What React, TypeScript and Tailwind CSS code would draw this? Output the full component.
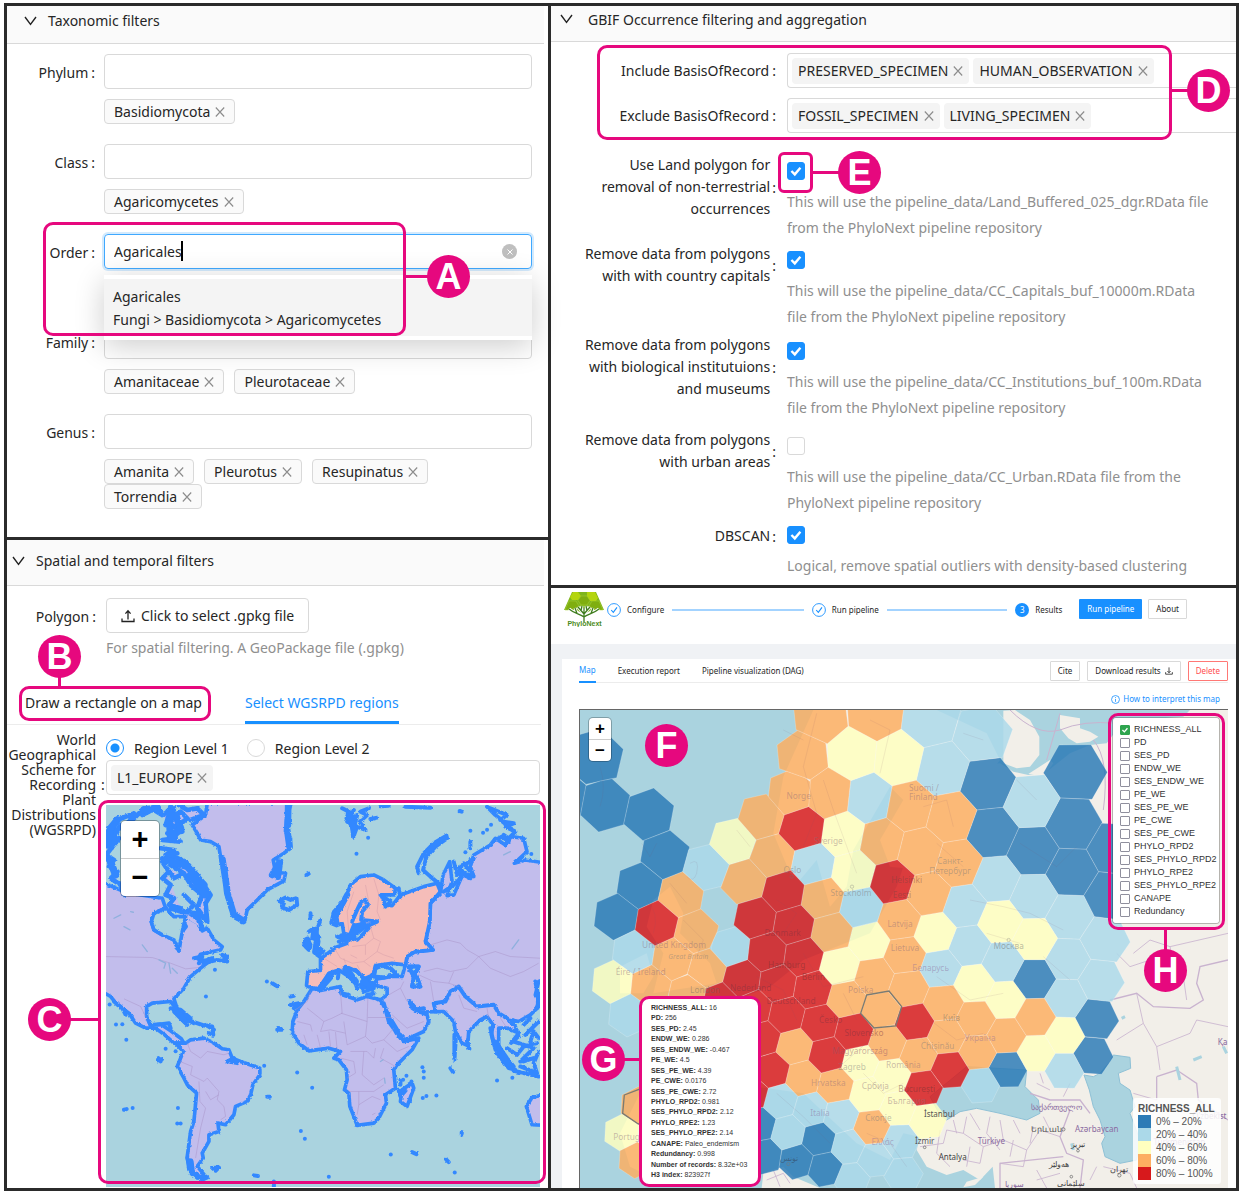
import React, { useId } from "react";

/* ---------- shared bits ---------- */

const Chevron = () => (
  <svg viewBox="0 0 13 10" className="h-[10px] w-[13px] shrink-0" fill="none" stroke="#222" strokeWidth="1.4">
    <path d="M1 1 L6.5 8.4 L12 1" />
  </svg>
);

const Cross = () => (
  <svg viewBox="0 0 10 10" className="h-[10px] w-[10px] shrink-0" fill="none" stroke="#8c8c8c" strokeWidth="1.1">
    <path d="M0.8 0.5 L9.2 9.5 M9.2 0.5 L0.8 9.5" />
  </svg>
);

const Tick = ({ className = "" }: { className?: string }) => (
  <svg viewBox="0 0 18 18" className={`pointer-events-none ${className}`} fill="none" stroke="#fff" strokeWidth="2.4">
    <path d="M4.4 9 L7.8 12.4 L13.4 5.8" />
  </svg>
);

function Tag({ children, filled = false }: { children: string; filled?: boolean }) {
  return (
    <span
      className={
        filled
          ? "inline-flex h-[26px] items-center gap-[5px] rounded-sm bg-[#f4f4f4] px-[6px]"
          : "inline-flex h-[25px] items-center gap-[5px] rounded-sm border border-[#d9d9d9] bg-[#fafafa] px-[9px]"
      }
    >
      {children}
      <button type="button" aria-label={`Remove ${children}`} className="flex">
        <Cross />
      </button>
    </span>
  );
}

function Badge({ letter, className }: { letter: string; className: string }) {
  return (
    <span
      className={`absolute z-30 flex size-[43px] items-center justify-center rounded-full bg-[#e6087e] font-['Liberation_Sans',sans-serif] text-[36px] leading-none font-bold text-white ${className}`}
    >
      {letter}
    </span>
  );
}

const Frame = ({ className }: { className: string }) => (
  <span className={`pointer-events-none absolute z-20 border-[3px] border-[#e6087e] ${className}`} />
);
const Link = ({ className }: { className: string }) => <span className={`absolute z-20 bg-[#e6087e] ${className}`} />;

function PanelHeader({ title, className, gap = "gap-[11px]" }: { title: string; className: string; gap?: string }) {
  return (
    <h2 className={`flex items-center border-b border-[#d9d9d9] bg-[#fafafa] ${className}`}>
      <button type="button" className={`flex items-center ${gap}`}>
        <Chevron />
        {title}
      </button>
    </h2>
  );
}

/* ---------- taxonomic filters ---------- */

const ranks = [
  { name: "Phylum", tags: ["Basidiomycota"] },
  { name: "Class", tags: ["Agaricomycetes"] },
  { name: "Order", tags: [], open: true },
  { name: "Family", tags: ["Amanitaceae", "Pleurotaceae"] },
  { name: "Genus", tags: ["Amanita", "Pleurotus", "Resupinatus", "Torrendia"] },
];

function Taxonomic() {
  const id = useId();
  return (
    <section className="relative border-b-[3px] border-[#2b2b2b] pb-[6px]">
      <PanelHeader title="Taxonomic filters" className="mr-1 h-[38px] pb-[8px] pl-[17px]" />
      <form className="grid gap-5 pt-[10px] pr-[16px]">
        {ranks.map((r) => (
          <div key={r.name} className="grid grid-cols-[88px_1fr] gap-x-[9px]">
            <label htmlFor={id + r.name} className="pt-2 text-right leading-[21px]">
              {r.name}
              <span className="ml-[3px]">:</span>
            </label>
            <div className="relative">
              <input
                id={id + r.name}
                defaultValue={r.open ? "Agaricales" : ""}
                className={
                  r.open
                    ? "h-[35px] w-full rounded-sm border border-[#40a9ff] px-[9px] shadow-[0_0_0_2px_#d3eafd] outline-none"
                    : "h-[35px] w-full rounded-sm border border-[#d9d9d9] px-[9px] outline-none"
                }
              />
              {r.open && (
                <>
                  <span className="absolute top-[7px] left-[77px] h-5 w-[2px] bg-black" />
                  <button
                    type="button"
                    aria-label="Clear"
                    className="absolute top-[10px] right-[15px] flex size-[15px] items-center justify-center rounded-full bg-[#bfbfbf]"
                  >
                    <svg viewBox="0 0 6 6" className="size-[6px]" stroke="#fff" strokeWidth="1">
                      <path d="M0.5 0.5 L5.5 5.5 M5.5 0.5 L0.5 5.5" />
                    </svg>
                  </button>
                  <ul className="absolute top-[41px] right-0 left-0 z-10 bg-white py-1 shadow-[0_6px_30px_rgba(0,0,0,0.2)]">
                    <li className="bg-[#f4f4f4] px-[9px] pt-[6px] pb-[5px] leading-[23px]">
                      Agaricales
                      <br />
                      Fungi &gt; Basidiomycota &gt; Agaricomycetes
                    </li>
                  </ul>
                </>
              )}
              <div className="mt-[10px] flex min-h-[25px] max-w-[340px] flex-wrap gap-x-[10px]">
                {r.tags.map((t) => (
                  <Tag key={t}>{t}</Tag>
                ))}
              </div>
            </div>
          </div>
        ))}
      </form>
      <div className="h-[22px]" />
      <Frame className="top-[216px] left-[36px] h-[114px] w-[363px] rounded-[10px]" />
      <Link className="top-[269px] left-[398px] h-[3px] w-6" />
      <Badge letter="A" className="top-[249px] left-[420px]" />
    </section>
  );
}

/* ---------- world map ---------- */

const coastPurple = [
  // Greenland
  "M350,24 L345,60 305,90 320,115 330,135 360,140 385,155 392,200 405,230 405,290 420,340 435,370 462,380 470,345 500,315 530,285 580,258 585,235 555,232 548,195 580,175 600,160 600,130 585,110 588,70 602,24 Z",
  // North America
  "M30,588 L60,605 80,630 115,655 135,685 165,700 195,700 220,718 250,745 280,745 272,732 240,708 210,688 178,690 168,665 168,635 185,625 240,620 262,648 250,612 280,580 300,545 330,520 355,500 322,492 330,478 390,465 395,455 370,435 350,400 335,408 322,385 300,372 285,365 280,400 265,440 265,468 250,435 215,420 190,405 182,380 190,355 225,340 215,310 150,300 100,290 30,260 Z",
  // South America
  "M255,745 L285,745 300,735 340,730 370,745 395,762 415,765 425,790 450,800 508,820 508,840 487,870 480,900 470,920 435,935 430,960 405,990 382,985 385,1010 355,1020 355,1040 335,1075 338,1090 320,1115 345,1145 320,1150 295,1125 290,1085 300,1010 310,980 318,895 290,870 280,850 260,815 270,790 278,770 Z",
  // Africa
  "M665,580 L690,587 750,575 755,600 800,615 830,605 870,615 885,625 900,670 925,715 940,740 985,730 965,765 920,810 910,825 915,880 885,900 888,925 865,970 850,985 800,992 790,965 778,935 775,895 762,885 770,855 768,825 745,795 730,790 750,770 715,760 655,768 625,745 605,712 607,680 620,645 640,620 Z",
  "M935,885 L965,865 970,880 950,935 930,920 Z",
  // Asia
  "M1370,205 L1305,195 1272,205 1310,170 1300,130 1262,125 1245,150 1215,130 1200,150 1150,180 1140,215 1150,245 1120,235 1108,215 1112,250 1090,300 1070,302 1085,260 1078,200 1058,240 1050,295 1020,325 1018,380 1005,440 1028,465 975,470 950,485 945,510 935,545 905,545 860,552 850,570 890,580 890,600 870,615 900,670 930,720 945,735 1000,710 1015,680 1010,660 985,650 957,618 965,640 985,652 1060,650 1090,680 1095,710 1115,745 1132,752 1135,710 1170,675 1190,665 1208,690 1203,720 1215,765 1238,785 1225,750 1225,700 1250,700 1285,715 1262,745 1285,725 1275,695 1250,672 1285,680 1320,660 1350,630 1335,600 1345,560 1370,550 Z",
  "M1370,898 L1325,908 1308,935 1325,990 1370,992 Z",
];

const europe =
  "M648,572 L652,530 690,527 690,492 735,458 770,445 757,425 778,425 800,435 835,400 812,395 790,390 778,420 760,415 755,385 738,392 722,385 730,350 765,310 780,270 810,245 850,240 880,255 915,280 912,300 872,300 885,330 905,332 930,300 1000,275 1040,265 1050,290 1020,325 1018,380 1005,440 1028,465 975,470 950,485 945,510 905,505 855,512 848,540 820,552 800,530 765,515 790,555 745,525 715,535 685,582 660,578 Z";

const scribbles =
  "M50,110 L70,100 55,130 90,90 60,150 85,130 50,175 M46,180 L70,195 55,215 80,230 60,250 90,270 100,300 M80,75 L130,55 110,90 160,40 175,50 155,60 200,30 215,60 190,45 M215,60 L250,40 235,80 270,50 290,70 260,95 240,90 275,110 230,115 255,130 215,135 270,140 M240,30 L235,60 225,90 M265,30 L290,45 320,40 340,60 300,75 M210,160 L250,165 225,180 260,175 M215,190 L250,185 285,200 320,240 360,300 345,325 350,380 320,340 335,300 300,270 280,235 240,210 M215,200 L235,230 215,250 240,270 225,300 250,310 235,330 270,340 M225,215 L250,250 270,240 M280,300 L310,330 290,350 320,370 M255,390 L270,370 285,395 265,420 M240,340 L270,350 320,355 335,400";

const blueBits = [
  "M755,40 L775,50 768,70 785,95 788,128 800,95 825,105 808,80 830,60 810,50 835,40 M790,45 L770,80 800,60 790,100",
  "M840,72 L860,68 M945,35 L1020,38 M1108,48 L1114,50 M870,34 L895,32",
  "M985,235 L980,215 1000,175 1030,145 1068,122 1070,130 1035,155 1008,185 998,225 1020,245 1048,268",
  "M1190,35 L1215,60 1240,80 1270,85 1245,95 1275,110 1255,130 1240,120 M1200,40 L1250,60 1230,75 1262,100 M1215,135 L1235,125 1255,140",
  "M565,318 L580,325 575,338 595,345 620,330 618,310 600,315 585,308 Z",
  "M640,450 L650,435 660,450 655,465 645,455 M655,410 L670,400 665,430 685,425 675,450 700,470 680,480 695,490 M680,400 L675,440 690,470 M660,355 L660,370 M690,375 L685,390",
  "M740,425 L760,430 745,440 775,435 M785,380 L800,345 812,320 825,315 832,330 815,350 812,375 860,380 825,395 800,415",
  "M700,560 L725,535 745,530 742,550 M760,520 L775,545 800,570 790,555 M790,550 L800,580 M815,560 L850,565 850,580 820,590 810,570 845,585 M752,595 L775,600 M830,600 L850,595 M795,525 L830,560 845,545",
  "M855,520 L850,545 880,548 920,540 900,520 875,512 Z",
  "M955,515 L985,515 975,535 990,575 965,575 970,545 Z",
  "M870,300 L900,320 885,335 M925,280 L930,305",
  "M1060,290 L1090,270 1120,240 1140,250 M1090,200 L1100,240 1120,205 1148,240 M1150,190 L1130,205 M1140,140 L1140,160",
  "M240,640 L270,645 300,670 265,660 310,685 290,675 340,692 365,695 368,720 355,715 M255,650 L290,690 M200,690 L235,685 240,700 M345,690 L370,705",
  "M410,800 L430,790 440,805 415,800 M290,1090 L300,1130 335,1155 350,1148",
  "M310,490 L335,485 325,505 365,490 M340,505 L380,495 410,500 395,480 410,485",
  "M70,620 L95,640 105,660",
  "M1200,700 L1210,745 1240,790 1275,825 1255,820 1220,775 M1215,740 L1250,790 1270,815 M1250,760 L1280,780 1300,755 1340,745 M1270,740 L1330,760 1290,800 1330,790 1300,800 M1300,690 L1320,670 M1305,720 L1345,680 M1320,740 L1330,710 1345,730 M1270,828 L1345,845 M1290,815 L1340,835 1330,805 1345,770",
  "M1335,560 L1345,610 1340,640",
  "M1092,720 L1092,795 1096,735 M1080,820 L1088,832 M1130,740 L1137,762",
  "M365,1120 L385,1118 375,1128 Z M490,1142 L502,1144 M550,1160 L550,1180 M1068,1095 L1075,1102 M965,1072 L978,1078 M1114,1012 L1114,1020",
  "M203,790 L210,800 M202,797 L214,793 M530,906 L538,906 M100,945 L108,943 M545,565 L560,574 M600,605 L610,603 M600,630 L625,625 610,640 M560,705 L575,705 565,700 M648,240 L655,236 M930,870 L930,858 M925,888 L930,905 945,888",
  "M1030,625 L1065,620 1080,590 1105,575 1125,605 1160,635 1210,630 1225,655 1250,670 M1035,650 L1030,625",
  "M880,625 L895,680 930,730 M905,690 L918,715 M960,620 L975,645 1000,640",
];

const dots = [
  [346, 605], [529, 560], [76, 689], [95, 688], [107, 735], [225, 762], [255, 769], [521, 813], [620, 833], [665, 879],
  [126, 940], [262, 940], [260, 986], [270, 986], [631, 1009], [643, 1032], [901, 1079], [715, 1146], [1093, 1133], [996, 817],
  [1000, 830], [1000, 849], [1038, 902], [1008, 904], [997, 910], [948, 843], [938, 855], [1220, 857], [1266, 849], [833, 128],
  [798, 176], [1140, 107], [1125, 172], [1178, 113], [1190, 104], [1202, 89], [1323, 177], [373, 525], [57, 629], [963, 860],
];

const countryLines =
  "M46,485 L185,488 240,505 285,522 325,518 M100,612 L150,635 165,665 M290,745 L300,770 330,790 350,770 400,780 415,775 M268,800 L305,815 300,840 340,860 350,850 385,890 380,915 400,935 405,965 390,975 M325,860 L328,920 345,940 330,1000 315,1090 M345,890 L360,915 385,900 M660,590 L650,620 615,645 M650,640 L700,680 725,670 755,655 750,590 M620,680 L660,690 665,710 M752,655 L830,680 832,610 M832,668 L905,668 M700,680 L690,710 720,705 765,715 770,750 M765,715 L760,680 M770,750 L825,725 830,680 M825,725 L845,745 880,735 910,700 M780,770 L830,770 850,790 855,760 M750,790 L790,800 795,835 770,850 M820,770 L815,840 850,870 880,850 M870,790 L915,815 M880,760 L870,790 M775,890 L850,890 880,870 M805,890 L805,930 800,960 M805,930 L845,905 870,915 M845,960 L855,955 M640,720 L650,750 M680,720 L690,760 M715,710 L720,755 M735,712 L740,765 M880,735 L920,770 955,755 M1020,450 L1070,435 1110,445 1130,465 1165,485 1215,470 1260,485 1349,490 M1165,485 L1200,520 1260,545 1300,530 1345,505 M1165,485 L1130,520 1080,530 1040,520 1000,530 M985,540 L1030,560 1075,565 1090,530 M1075,565 L1105,575 M1020,560 L1030,620 M895,600 L930,580 940,560 M930,580 L950,620 M905,660 L950,700 1000,680 M1105,600 L1120,640 1160,650 M1190,640 L1195,670 M1230,670 L1250,700";

const europeLines =
  "M790,290 L770,350 775,410 M825,270 L835,320 M850,250 L865,300 860,350 870,375 M840,395 L850,430 825,450 785,455 M700,490 L740,515 M735,465 L750,490 785,505 820,500 860,470 880,480 910,490 M825,450 L825,480 M760,490 L765,505 M850,430 L870,440 860,470 M800,510 L815,540 M820,500 L840,515 M780,480 L800,490";

function WorldMap() {
  return (
    <svg viewBox="46 30 1303 1148" preserveAspectRatio="xMinYMin slice" className="block h-[382px] w-full bg-[#aad3df]" role="img" aria-label="World regions">
      <defs>
        <filter id="rough" x="-5%" y="-5%" width="110%" height="110%" colorInterpolationFilters="sRGB">
          <feTurbulence type="fractalNoise" baseFrequency="0.12" numOctaves="2" seed="4" />
          <feDisplacementMap in="SourceGraphic" scale="8" xChannelSelector="R" yChannelSelector="G" />
        </filter>
      </defs>
      <g filter="url(#rough)" stroke="#3388ff" strokeWidth="11" strokeLinejoin="round" strokeLinecap="round">
        {coastPurple.map((d) => (
          <path key={d} d={d} fill="#c2bdec" />
        ))}
        <path d={scribbles} fill="#c2bdec" fillRule="evenodd" strokeWidth="14" />
        <path d="M80,75 L60,100 50,150 M160,45 L200,40 M235,50 L240,130 270,100 255,60 M225,195 L290,215 340,270 M55,190 L75,240 M300,240 L345,300" fill="none" strokeWidth="22" />
        <path d="M265,468 L250,435 215,420 190,405 182,380 190,355 225,340 250,365 285,365 275,410 Z" fill="#aad3df" />
        <path d={europe} fill="#f5bdb9" />
        <path d="M955,515 L985,515 975,535 990,575 965,575 970,545 Z M855,520 L850,545 880,548 920,540 900,520 875,512 Z" fill="#aad3df" />
        <path d={blueBits.join(" ")} fill="none" strokeWidth="12" />
        <path d="M590,105 L597,155 M593,30 L592,90 M395,190 L412,300 430,360 458,378 M545,240 L568,200 562,245" fill="none" strokeWidth="20" />
        <path d="M738,385 L735,365 770,300 M775,55 L790,105 M300,1100 L305,1135 335,1150" fill="none" strokeWidth="18" />
        <path d="M650,435 L655,455 M672,405 L680,440 675,470 M755,425 L785,430 800,395 820,390 M770,525 L795,560 M820,560 L840,575 M255,650 L285,680 M690,580 L720,545" fill="none" strokeWidth="20" />
      </g>
      <g fill="none" stroke="#a58fc4" strokeOpacity="0.6" strokeWidth="2.2">
        <path d={countryLines} />
        <path d={europeLines} stroke="#d29aa8" />
      </g>
      <g fill="none" stroke="#8fb0dd" strokeWidth="5" strokeLinecap="round">
        <path d="M205,495 L225,505 220,520 M235,505 L240,535 M245,520 L260,535 M155,450 L170,470 M70,370 L90,360 M120,350 L128,352 M100,395 L118,405 M1265,462 L1285,435 M870,800 L878,795 M882,850 L884,865 M1240,180 L1260,170" strokeWidth="4" />
      </g>
      <g fill="#3388ff">
        {dots.map(([x, y]) => (
          <circle key={`${x}-${y}`} cx={x} cy={y} r="6" />
        ))}
      </g>
    </svg>
  );
}

function ZoomButtons({ small = false }: { small?: boolean }) {
  return (
    <div
      className={
        small
          ? "absolute top-2 left-[9px] grid w-[22px] divide-y divide-[#ccc] rounded-sm bg-white text-[17px] leading-[21px] shadow-[0_0_0_1px_rgba(0,0,0,0.25)]"
          : "absolute top-4 left-[15px] grid w-[38px] divide-y divide-[#ccc] rounded-sm bg-white text-[29px] leading-[37px] shadow-[0_0_0_1px_rgba(0,0,0,0.3)]"
      }
    >
      <button type="button" aria-label="Zoom in" className="font-['Liberation_Sans',sans-serif] font-bold text-black">
        +
      </button>
      <button type="button" aria-label="Zoom out" className="font-['Liberation_Sans',sans-serif] font-bold text-black">
        −
      </button>
    </div>
  );
}

/* ---------- spatial filters ---------- */

function Radio({ label, on = false }: { label: string; on?: boolean }) {
  return (
    <label className="flex items-center gap-[10px]">
      <input
        type="radio"
        name="level"
        defaultChecked={on}
        className="size-[18px] appearance-none rounded-full border border-[#d9d9d9] bg-white checked:border-[#1890ff] checked:bg-[radial-gradient(circle,#1890ff_0_4px,#fff_5px)]"
      />
      {label}
    </label>
  );
}

function Spatial() {
  return (
    <section className="relative">
      <PanelHeader title="Spatial and temporal filters" className="mr-1 h-[46px] pb-[4px] pl-[5px]" />
      <div className="grid grid-cols-[89px_1fr] gap-x-[10px] pt-3">
        <label htmlFor="gpkg" className="pt-2 text-right leading-[21px]">
          Polygon<span className="ml-[3px]">:</span>
        </label>
        <div>
          <button id="gpkg" type="button" className="flex h-[35px] items-center gap-[6px] rounded-sm border border-[#d9d9d9] px-[14px]">
            <svg viewBox="0 0 14 14" className="size-[14px]" fill="none" stroke="#222" strokeWidth="1.3">
              <path d="M1 9.5 V12.5 H13 V9.5 M7 10.5 V2 M4.4 4.6 L7 1.8 L9.6 4.6" />
            </svg>
            Click to select .gpkg file
          </button>
          <p className="pt-1 leading-[22px] text-[#8f8f8f]">For spatial filtering. A GeoPackage file (.gpkg)</p>
        </div>
      </div>
      <div className="relative mt-[25px] mr-[7px] flex gap-[43px] border-b border-[#ececec] pl-[18px]">
        <button type="button" className="h-[40px] pb-[3px]">
          Draw a rectangle on a map
        </button>
        <button type="button" className="h-[40px] border-b-[3px] border-[#1890ff] text-[#1890ff]">
          Select WGSRPD regions
        </button>
        <Frame className="top-[2px] left-[12px] h-[35px] w-[192px] rounded-[10px]" />
        <Link className="-top-[8px] left-[51px] h-[11px] w-[3px]" />
        <Badge letter="B" className="-top-[49px] left-[31px]" />
      </div>
      <div className="relative flex">
        <div className="flex h-[118px] w-[99px] shrink-0 items-center">
          <span id="wg" className="w-[89px] text-right leading-[15px]">
            World Geographical Scheme for Recording Plant Distributions (WGSRPD)
          </span>
          <span className="ml-[5px]">:</span>
        </div>
        <div className="flex-1 pr-2">
          <div className="flex h-[35px] items-center gap-[18px] pt-[11px]" role="radiogroup" aria-labelledby="wg">
            <Radio label="Region Level 1" on />
            <Radio label="Region Level 2" />
          </div>
          <div className="flex h-[35px] items-center rounded-sm border border-[#d9d9d9] px-[4px]">
            <Tag filled>L1_EUROPE</Tag>
          </div>
          <div className="relative mt-[10px]">
            <WorldMap />
            <ZoomButtons />
            <Frame className="-top-[5px] -right-[6px] bottom-[3px] -left-2 rounded-[10px]" />
            <Link className="top-[213px] -left-[36px] h-[3px] w-[30px]" />
            <Badge letter="C" className="top-[193px] -left-[78px]" />
          </div>
        </div>
      </div>
    </section>
  );
}

/* ---------- GBIF filters ---------- */

const records = [
  { label: "Include BasisOfRecord", tags: ["PRESERVED_SPECIMEN", "HUMAN_OBSERVATION"] },
  { label: "Exclude BasisOfRecord", tags: ["FOSSIL_SPECIMEN", "LIVING_SPECIMEN"] },
];

const options = [
  { label: ["Use Land polygon for", "removal of non-terrestrial", "occurrences"], on: true, hint: ["This will use the pipeline_data/Land_Buffered_025_dgr.RData file", "from the PhyloNext pipeline repository"], space: "mb-[2px]" },
  { label: ["Remove data from polygons", "with with country capitals"], on: true, hint: ["This will use the pipeline_data/CC_Capitals_buf_10000m.RData", "file from the PhyloNext pipeline repository"], space: "mb-1" },
  { label: ["Remove data from polygons", "with biological institutuions", "and museums"], on: true, hint: ["This will use the pipeline_data/CC_Institutions_buf_100m.RData", "file from the PhyloNext pipeline repository"], space: "mb-2" },
  { label: ["Remove data from polygons", "with urban areas"], on: false, hint: ["This will use the pipeline_data/CC_Urban.RData file from the", "PhyloNext pipeline repository"], space: "mb-[2px]" },
  { label: ["DBSCAN"], on: true, hint: ["Logical, remove spatial outliers with density-based clustering"], space: "" },
];

function Gbif() {
  return (
    <section className="relative border-b-[3px] border-[#2b2b2b] pb-[6px]">
      <PanelHeader title="GBIF Occurrence filtering and aggregation" gap="gap-[15px]" className="h-[36px] pb-[9px] pl-[9px]" />
      <div className="relative grid gap-[10px] pt-[11px]">
        {records.map((r) => (
          <div key={r.label} className="grid grid-cols-[225px_1fr] gap-x-[11px]">
            <span className="pt-[7px] text-right leading-[21px]">
              {r.label}
              <span className="ml-[3px]">:</span>
            </span>
            <div className="flex h-[35px] items-center gap-1 rounded-l-sm border border-r-0 border-[#d9d9d9] px-[4px]">
              {r.tags.map((t) => (
                <Tag key={t} filled>
                  {t}
                </Tag>
              ))}
            </div>
          </div>
        ))}
        <Frame className="top-[3px] left-[46px] h-[95px] w-[575px] rounded-[10px]" />
        <Link className="top-[47px] left-[620px] h-[3px] w-[18px]" />
        <Badge letter="D" className="top-[27px] left-[636px]" />
      </div>
      <div className="relative pt-[21px]">
        {options.map((o, i) => (
          <div key={i} className={`grid grid-cols-[225px_1fr] gap-x-[11px] ${o.space}`}>
            <div className={o.label.length === 1 ? "flex items-center justify-end self-start pt-[7px]" : "flex items-center justify-end self-start"}>
              <label htmlFor={`opt${i}`} className="text-right leading-[22px]">
                {o.label.map((l) => (
                  <React.Fragment key={l}>
                    {l}
                    <br />
                  </React.Fragment>
                ))}
              </label>
              <span className="ml-[2px]">:</span>
            </div>
            <div>
              <div className="relative mt-2 size-[18px]">
                <input
                  id={`opt${i}`}
                  type="checkbox"
                  defaultChecked={o.on}
                  className="peer block size-[18px] appearance-none rounded-[3px] border border-[#d9d9d9] bg-white checked:border-[#1890ff] checked:bg-[#1890ff]"
                />
                <Tick className="absolute inset-0 hidden size-[18px] peer-checked:block" />
              </div>
              <p className="pt-[9px] leading-[26px] whitespace-nowrap text-[#8f8f8f]">
                {o.hint[0]}
                {o.hint[1] && <br />}
                {o.hint[1]}
              </p>
            </div>
          </div>
        ))}
        <Frame className="top-[19px] left-[227px] h-[41px] w-[35px] rounded-md" />
        <Link className="top-[38px] left-[261px] h-[3px] w-[27px]" />
        <Badge letter="E" className="top-[18px] left-[287px]" />
      </div>
    </section>
  );
}

/* ---------- hexagon map ---------- */

type Cell = [number, number, string];
const layers: Record<string, number[][]> = {
  "#2c7bb6": [
    [73, 173], [105, 315], [-27, 291], [236, 344], [284, 468], [209, 559], [139, 650], [1252, 252], [1266, 400], [1516, 218],
    [1509, 374], [1387, 455], [1504, 519], [1633, 448], [1618, 590], [1393, 838], [1578, 958], [1568, 1067], [1313, 1107],
    [565, 1275], [745, 1317], [583, 1368], [680, 1383], [765, 1407],
  ],
  "#abd9e9": [
    [408, 503], [728, 493], [872, 623], [896, 298], [1080, 60], [1235, 105], [1116, 209], [1383, 308], [1278, 540], [1390, 592],
    [1183, 621], [1498, 652], [1602, 720], [1198, 738], [1112, 807], [1298, 787], [1488, 896], [1590, 843], [1492, 780],
    [1484, 1112], [1233, 1155], [192, 758], [483, 745], [177, 945], [630, 1203], [722, 1230], [810, 1250], [655, 1298],
    [835, 1340], [915, 1378], [990, 1325], [1000, 1425], [845, 1440],
  ],
  "#ffffbf": [
    [489, 425], [818, 405], [850, 515], [848, 165], [985, 178], [1095, 699], [897, 726], [1289, 667], [1392, 720], [1212, 853],
    [1305, 902], [1484, 1008], [1397, 1059], [870, 1088], [966, 1128], [893, 1183], [985, 1225], [1072, 1262], [128, 845],
    [808, 799], [155, 1298],
  ],
  "#fdae61": [
    [332, 586], [376, 698], [574, 352], [525, 546], [608, 470], [756, 596], [784, 698], [777, 285], [660, 278], [698, 170],
    [752, 50], [915, 40], [935, 428], [1018, 322], [1141, 354], [1048, 456], [1164, 492], [1076, 584], [988, 662], [1003, 768],
    [1121, 910], [1014, 865], [1217, 957], [1309, 1008], [1395, 953], [1222, 1057], [1130, 1010], [1045, 1065], [905, 1283],
    [242, 858], [308, 778], [413, 808], [355, 885], [673, 1040], [828, 898], [933, 930], [913, 830], [953, 1030], [699, 1135],
    [795, 1158], [207, 1218], [197, 1380], [265, 1130],
  ],
  "#d7191c": [
    [260, 670], [697, 388], [640, 576], [558, 656], [670, 676], [966, 547], [1033, 967], [1140, 1108], [1060, 1165], [450, 905],
    [516, 837], [590, 757], [699, 772], [622, 852], [727, 870], [648, 945], [552, 925], [749, 970], [771, 1065], [850, 996],
    [605, 1113], [577, 1015], [545, 1180],
  ],
};

const cells: Cell[] = Object.entries(layers).flatMap(([c, pts]) => pts.map(([x, y]) => [x, y, c] as Cell));

/* Each cell starts as a hexagon sized by its neighbours, then is cut by the bisectors to them. */
function cellPath([cx, cy]: Cell): string {
  const near = cells
    .map(([x, y]) => ({ dx: x - cx, dy: y - cy, d: Math.hypot(x - cx, y - cy) }))
    .filter((n) => n.d > 1 && n.d < 240)
    .sort((a, b) => a.d - b.d);
  const k = near.slice(0, 6).filter((n) => n.d < near[0].d * 1.4);
  const dist = k.reduce((s, n) => s + n.d, 0) / k.length;
  let sx = 0;
  let sy = 0;
  k.forEach((n) => {
    const a = Math.atan2(n.dy, n.dx) * 6;
    sx += Math.cos(a);
    sy += Math.sin(a);
  });
  const base = Math.atan2(sy, sx) / 6 + Math.PI / 6;
  const radius = (dist / Math.sqrt(3)) * (k.length > 5 ? 1.3 : k.length > 3 ? 1.09 : 1.05);
  let poly = Array.from({ length: 6 }, (_, i) => {
    const a = base + (i * Math.PI) / 3;
    return [cx + radius * Math.cos(a), cy + radius * Math.sin(a)];
  });
  near.forEach((n) => {
    const side = (p: number[]) => (p[0] - cx - n.dx / 2) * n.dx + (p[1] - cy - n.dy / 2) * n.dy;
    const out: number[][] = [];
    poly.forEach((p, i) => {
      const q = poly[(i + 1) % poly.length];
      const a = side(p);
      const b = side(q);
      if (a <= 0) out.push(p);
      if (a * b < 0) {
        const t = a / (a - b);
        out.push([p[0] + (q[0] - p[0]) * t, p[1] + (q[1] - p[1]) * t]);
      }
    });
    poly = out;
  });
  return poly.map((p) => p.map((v) => Math.round(v)).join(",")).join(" ");
}

const places: [number, number, string, string][] = [
  [686, 298, "Norge", "#8a6a78"], [775, 431, "Sverige", "#8a6a78"], [667, 518, "Oslo", "#777"], [843, 588, "Stockholm", "#777"],
  [1010, 548, "Helsinki", "#7a4040"], [996, 595, "Eesti", "#7a4040"], [990, 682, "Latvija", "#8a6a78"], [1005, 752, "Lietuva", "#8a6a78"],
  [638, 708, "Danmark", "#7a3040"], [312, 745, "United Kingdom", "#8a6a78"], [355, 778, "Great Britain", "#777"], [212, 826, "Éire / Ireland", "#8a6a78"],
  [405, 880, "London", "#666"], [542, 872, "Nederland", "#7a3040"], [650, 803, "Hamburg", "#6a3030"], [730, 840, "Berlin", "#6a3030"],
  [663, 913, "Deutschland", "#7a3040"], [872, 880, "Polska", "#8a6a78"], [782, 968, "Česko", "#7a3040"], [882, 1007, "Slovensko", "#7a3040"],
  [870, 1062, "Magyarország", "#8a5068"], [846, 1110, "Zagreb", "#777"], [775, 1158, "Hrvatska", "#8a6a78"], [916, 1166, "Србија", "#8a6a78"],
  [1000, 1105, "România", "#8a6a78"], [1040, 1177, "București", "#6a3030"], [1010, 1213, "България", "#8a6a78"], [925, 1262, "Скопје", "#777"],
  [938, 1336, "Ελλάς", "#8a6a9a"], [750, 1247, "Italia", "#8a6a9a"], [180, 1320, "Portugal", "#8a6a78"], [657, 1382, "تونس", "#334"],
  [1062, 272, "Suomi /", "#8a6a78"], [1060, 300, "Finland", "#8a6a78"], [1140, 493, "Санкт-", "#777"], [1140, 521, "Петербург", "#777"],
  [1316, 748, "Москва", "#666"], [1082, 814, "Беларусь", "#8a6a9a"], [1144, 962, "Київ", "#666"], [1230, 1023, "Україна", "#8a6a9a"],
  [1103, 1046, "Chișinău", "#777"],
];

const openPlaces: [number, number, string, string][] = [
  [1108, 1252, "İstanbul", "#555"], [1064, 1332, "İzmir", "#555"], [1148, 1380, "Antalya", "#444"], [1264, 1331, "Türkiye", "#8a6aa0"],
  [1458, 1230, "საქართველო", "#8a6aa0"], [1430, 1296, "Երևան", "#555"], [1580, 1296, "Azərbaycan", "#8a6aa0"], [1525, 1342, "تبریز", "#444"],
  [1468, 1402, "هەولێر", "#444"], [1648, 1415, "تهران", "#444"], [1504, 1457, "سلێمانی", "#444"], [1334, 1460, "سوريا", "#8a6aa0"],
  [1958, 1034, "Қа", "#8a6aa0"], [1918, 1256, "O'zbekist", "#8a6aa0"], [1828, 1335, "Türkmenistan", "#8a6aa0"],
];

function HexMap() {
  return (
    <svg viewBox="30 30 1944 1434" preserveAspectRatio="xMinYMin slice" className="block h-[478px] w-full bg-[#aad3df]" role="img" aria-label="Species richness">
      <g fill="#f2efe9">
        <path d="M1974,30 L1860,30 1840,50 1700,60 1640,90 1610,130 1560,135 1500,160 1430,215 1375,225 1330,215 1290,190 1200,200 1000,500 980,560 900,700 700,780 600,860 450,920 360,960 350,1080 240,1120 150,1300 180,1400 260,1440 420,1280 560,1160 700,1180 860,1330 960,1380 1000,1300 1050,1310 1040,1350 1070,1400 1130,1425 1180,1410 1230,1440 1268,1400 1275,1464 1974,1464 Z" />
        <path d="M1300,32 L1335,30 1380,60 1408,110 1408,165 1380,200 1340,205 1300,190 Z M1470,45 L1530,55 1530,85 1560,95 1585,110 1560,125 1520,130 1495,115 1470,85 Z M1375,222 L1440,180 1450,190 1425,225 Z" />
        <path d="M730,30 L640,230 610,400 660,520 690,540 740,480 780,620 830,560 850,450 960,260 1000,300 930,420 960,500 1150,520 1200,300 1290,180 1250,100 1100,30 Z" />
        <path d="M300,560 L340,640 330,700 420,790 440,850 250,880 280,760 230,680 250,600 Z M150,800 L230,760 250,830 220,880 150,880 Z" />
        <path d="M1190,1445 L1240,1430 1215,1455 1180,1462 Z M575,1464 L580,1420 640,1400 670,1430 750,1464 Z" />
      </g>
      <g fill="#aad3df" stroke="#8fc1d6" strokeWidth="3">
        <path d="M1370,1110 L1365,1160 1405,1200 1410,1240 1370,1260 1290,1240 1220,1225 1170,1235 1130,1260 1110,1245 1080,1190 1190,1100 Z" />
        <path d="M1542,1125 L1570,1130 1590,1120 1620,1085 1630,1065 1680,1072 1682,1105 1645,1120 1650,1150 1680,1170 1695,1220 1680,1240 1710,1320 1700,1380 1650,1390 1605,1370 1595,1330 1605,1310 1590,1260 1570,1220 1558,1170 Z" />
      </g>
      <g fill="none" stroke="#c9b3cf" strokeWidth="3">
        <path d="M1320,30 Q1400,110 1470,90 Q1540,60 1640,70 M1470,40 L1430,180 M1570,120 Q1620,180 1600,330" />
        <path d="M1620,900 L1700,880 1750,920 1860,925 1900,900 1880,850 1890,800 1974,780 M1760,1130 L1820,1110 1880,1150 1885,1200 1974,1260 M1760,1130 L1760,1200 M1500,1230 L1470,1310 1490,1360 1540,1380 1530,1464 M1290,1464 L1290,1390 1480,1370 M1380,1180 L1440,1200 1530,1200 1560,1240" strokeWidth="4" />
        <path d="M1640,760 L1680,800 1740,780 1760,850 1840,830 1850,900 M1700,880 L1720,970 1640,1020 M1720,970 L1760,1040 1770,1110 M1760,1040 L1860,1000 1880,960 1974,980 M1690,1180 L1760,1200 M1600,1400 L1680,1420 1700,1464 M1050,1340 L1120,1330 1130,1290 1180,1300 1190,1250 M1180,1300 L1240,1340 1230,1390 1180,1380 M1240,1340 L1300,1320 1290,1260 M1300,1320 L1370,1350 1360,1400 M1370,1350 L1410,1290 1470,1310 M1360,1400 L1290,1390 M1200,1240 L1230,1290 M1330,1260 L1350,1300 M1400,1410 L1430,1464 M1470,1420 L1400,1440 M1690,760 L1740,720 1800,740 1974,700 M1800,740 L1820,830 M1400,1150 L1440,1170 M1580,1400 L1560,1440 M590,1440 L640,1420 660,1450 M610,1410 L630,1460 M1110,1290 L1100,1360 1140,1400 M1150,1260 L1160,1300 M1260,1250 L1250,1300 1290,1350 M1330,1320 L1320,1370 M1200,1340 L1190,1400 M1390,1280 L1380,1330 M1420,1250 L1440,1290 M1500,1150 L1480,1190 M1410,1120 L1420,1150" strokeWidth="2.5" />
      </g>
      <path d="M1820,1100 L1830,1140 M1870,1080 L1895,1070 M1655,955 L1665,950 M1505,1330 L1510,1350 M1960,1040 L1970,1060" stroke="#aad3df" strokeWidth="9" fill="none" />
      <g fillOpacity="0.84" stroke="#fff" strokeOpacity="0.3" strokeWidth="2">
        {cells.map((c) => (
          <polygon key={`${c[0]}-${c[1]}`} points={cellPath(c)} fill={c[2]} />
        ))}
      </g>
      <g fill="none" stroke="#7d4a6c" strokeOpacity="0.1" strokeWidth="3">
        <path d="M90,200 Q110,260 90,320 M215,430 L240,470 260,430 M300,550 L350,610 M340,660 L400,720 380,770 M230,600 Q270,640 250,700 M740,40 L700,200 740,340 700,440 M760,240 L790,330 860,520 M900,60 L960,90 930,220 M620,600 L680,640 640,700 M560,830 L640,870 680,960 M700,760 L760,860 880,830 M820,880 L860,960 M900,1020 L820,1090 M620,1180 L700,1250 780,1330 M1060,320 L1130,300 1150,380 M1100,430 L1180,500 M1200,600 L1300,620 1380,640 1480,690 M1100,830 L1200,900 1300,880 M1080,960 L1160,1020 1240,1000 M1250,700 L1350,730 M1420,770 L1500,840 M1350,430 L1460,500 1520,440 M880,1120 L940,1180 1000,1150 M890,1300 L960,1330 1010,1400" />
        <path d="M360,490 Q390,470 380,520 Q370,550 350,530 M500,390 L540,440 M640,90 L700,120 M1240,120 L1180,100 M1340,240 L1400,300 M1040,1000 L1100,1060" />
      </g>
      <g fill="none" stroke="#7b7b72" strokeWidth="4">
        <polygon points="890,885 957,873 995,920 977,978 912,984 872,940" />
        <polygon points="163,1185 215,1165 262,1200 255,1255 205,1272 158,1240" />
      </g>
      <g className="font-['Noto_Sans',sans-serif]" fontSize="25" textAnchor="middle">
        {places.map(([x, y, t, c]) => (
          <text key={t} x={x} y={y} fill={c} fillOpacity="0.45" className={t === "Great Britain" ? "italic" : ""} fontSize={t === "Great Britain" ? 21 : 25}>
            {t}
          </text>
        ))}
        {openPlaces.map(([x, y, t, c]) => (
          <text key={t} x={x} y={y} fill={c} fontSize="24">
            {t}
          </text>
        ))}
      </g>
      <g fill="none" stroke="#777" strokeWidth="2.5">
        <circle cx="1480" cy="1288" r="5" />
        <circle cx="1648" cy="1426" r="5" />
        <circle cx="1504" cy="1430" r="4" />
        <circle cx="1064" cy="1342" r="4" />
        <circle cx="1524" cy="1352" r="4" />
        <circle cx="1316" cy="720" r="5" strokeOpacity="0.4" />
        <circle cx="665" cy="530" r="5" strokeOpacity="0.4" />
        <circle cx="846" cy="560" r="5" strokeOpacity="0.4" />
        <circle cx="655" cy="1392" r="5" strokeOpacity="0.6" />
      </g>
    </svg>
  );
}

/* ---------- results app ---------- */

const metrics = [
  "RICHNESS_ALL", "PD", "SES_PD", "ENDW_WE", "SES_ENDW_WE", "PE_WE", "SES_PE_WE", "PE_CWE", "SES_PE_CWE", "PHYLO_RPD2",
  "SES_PHYLO_RPD2", "PHYLO_RPE2", "SES_PHYLO_RPE2", "CANAPE", "Redundancy",
];

const details = [
  ["RICHNESS_ALL", "16"], ["PD", "256"], ["SES_PD", "2.45"], ["ENDW_WE", "0.286"], ["SES_ENDW_WE", "-0.467"], ["PE_WE", "4.5"],
  ["SES_PE_WE", "4.39"], ["PE_CWE", "0.0176"], ["SES_PE_CWE", "2.72"], ["PHYLO_RPD2", "0.981"], ["SES_PHYLO_RPD2", "2.12"],
  ["PHYLO_RPE2", "1.23"], ["SES_PHYLO_RPE2", "2.14"], ["CANAPE", "Paleo_endemism"], ["Redundancy", "0.998"],
  ["Number of records", "8.32e+03"], ["H3 index", "823927f"],
];

const legend = [
  ["bg-[#2c7bb6]", "0% – 20%"],
  ["bg-[#abd9e9]", "20% – 40%"],
  ["bg-[#ffffbf]", "40% – 60%"],
  ["bg-[#fdae61]", "60% – 80%"],
  ["bg-[#d7191c]", "80% – 100%"],
];

function Logo() {
  return (
    <svg viewBox="0 0 84 72" className="h-[36px] w-[42px] shrink-0" role="img" aria-label="PhyloNext">
      <path d="M18 2 H66 L82 38 H58 L42 46 26 38 H2 Z" fill="#7fb51c" />
      <path d="M20 2 l10 0 6 8 -6 8 -12 0 -4 -6 Z M48 2 h16 l6 12 -4 6 h-12 l-6 -8 Z" fill="#b4d50e" />
      <path d="M36 10 h12 l6 9 -6 9 h-12 l-6 -9 Z M12 20 h14 l5 9 -5 9 H4 Z M58 20 h14 l8 18 h-22 l-5 -9 Z" fill="#7fae10" stroke="#a9d13a" strokeWidth="1" />
      <path d="M42 60 V34 M42 52 C34 46 24 46 12 36 M42 52 C50 46 60 46 72 36 M42 46 L30 32 M42 46 L54 32 M28 45 L24 34 M56 45 L60 34 M36 39 L38 30 M48 39 L46 30" fill="none" stroke="#fff" strokeWidth="6" />
      <path d="M42 62 V34 M42 52 C34 46 24 46 12 36 M42 52 C50 46 60 46 72 36 M42 46 L30 32 M42 46 L54 32 M28 45 L24 34 M56 45 L60 34 M36 39 L38 30 M48 39 L46 30" fill="none" stroke="#3f7d1e" strokeWidth="2.6" />
      <text x="43" y="69" fontSize="14" fontWeight="bold" textAnchor="middle" fill="#4c8c1c" className="font-['Liberation_Sans',sans-serif]">
        PhyloNext
      </text>
    </svg>
  );
}

function Step({ label, n }: { label: string; n?: number }) {
  return (
    <span className="flex items-center gap-[6px]">
      {n ? (
        <span className="flex size-[14px] items-center justify-center rounded-full bg-[#1890ff] text-white">{n}</span>
      ) : (
        <svg viewBox="0 0 14 14" className="size-[14px]" fill="none" stroke="#1890ff">
          <circle cx="7" cy="7" r="6.4" strokeWidth="0.9" />
          <path d="M4.2 7 L6.3 9.4 L10 4.4" strokeWidth="1.1" />
        </svg>
      )}
      {label}
    </span>
  );
}

const outline = "flex h-5 items-center gap-1 rounded-[1px] border border-[#d9d9d9] bg-white px-[7px]";

function Results() {
  return (
    <section className="flex flex-col bg-[#f0f2f5] text-[8px] leading-3">
      <header className="flex h-[56px] items-center bg-white pr-[49px] pb-[14px] pl-[12px]">
        <Logo />
        <div className="mr-[17px] ml-[2px] flex flex-1 items-center gap-[8px] pt-[2px]">
          <Step label="Configure" />
          <span className="h-[2px] flex-[131] bg-[#a3d3ff]" />
          <Step label="Run pipeline" />
          <span className="h-[2px] flex-[120] bg-[#a3d3ff]" />
          <Step label="Results" n={3} />
        </div>
        <button type="button" className="mr-[6px] h-5 rounded-[1px] bg-[#1890ff] px-2 text-white">
          Run pipeline
        </button>
        <button type="button" className={outline}>
          About
        </button>
      </header>
      <div className="mt-[15px] ml-[11px] bg-white pr-2 pl-[17px]">
        <div className="flex h-[24px] items-start border-b border-[#ececec]">
          <nav className="flex gap-[22px]">
            <button type="button" className="h-[24px] border-b-2 border-[#1890ff] text-[#1890ff]">
              Map
            </button>
            <button type="button">Execution report</button>
            <button type="button">Pipeline visualization (DAG)</button>
          </nav>
          <div className="mt-[2px] ml-auto flex gap-[7px]">
            <button type="button" className={outline}>
              Cite
            </button>
            <button type="button" className={outline}>
              Download results
              <svg viewBox="0 0 10 10" className="size-[8px]" fill="none" stroke="#222" strokeWidth="1">
                <path d="M0.8 6.5 V9 H9.2 V6.5 M5 0.5 V7 M3 5 L5 7.2 L7 5" />
              </svg>
            </button>
            <button type="button" className="flex h-5 items-center rounded-[1px] border border-[#ff7875] px-[7px] text-[#ff4d4f]">
              Delete
            </button>
          </div>
        </div>
        <a href="#help" className="flex h-[26px] items-center justify-end gap-[3px] pt-[6px] pr-2 text-[#1890ff]">
          <svg viewBox="0 0 10 10" className="size-[9px]" fill="none" stroke="#1890ff" strokeWidth="0.9">
            <circle cx="5" cy="5" r="4.4" />
            <path d="M5 4.4 V7.6 M5 2.4 V3.4" />
          </svg>
          How to interpret this map
        </a>
        <div className="relative border-t border-l border-[#666] font-['Liberation_Sans',sans-serif]">
          <HexMap />
          <ZoomButtons small />
          <Badge letter="F" className="top-[14px] left-[65px]" />

          <fieldset className="absolute top-[8px] right-[9px] flex w-[106px] flex-col rounded-[3px] bg-white py-[5px] pl-[7px] text-[9px] leading-[13px] text-[#333] shadow-[0_0_0_1px_rgba(0,0,0,0.25)]">
            {metrics.map((m, i) => (
              <label key={m} className="flex items-center gap-1">
                <span className="relative size-[10px]">
                  <input
                    type="checkbox"
                    defaultChecked={i === 0}
                    className="peer block size-[10px] appearance-none rounded-[1px] border border-[#8f8f9d] bg-white checked:border-[#2ea44f] checked:bg-[#2ea44f]"
                  />
                  <Tick className="absolute inset-0 hidden size-[10px] peer-checked:block" />
                </span>
                {m}
              </label>
            ))}
          </fieldset>
          <Frame className="top-[3px] right-[3px] h-[217px] w-[117px] rounded-[10px]" />
          <Link className="top-[218px] right-[61px] h-6 w-[3px]" />
          <Badge letter="H" className="top-[239px] right-[41px]" />

          <dl className="absolute top-[286px] left-[59px] z-10 flex h-[191px] w-[122px] flex-col justify-between rounded-[10px] border-[3px] border-[#e6087e] bg-white py-[4px] pl-[9px] text-[7px] leading-[10px] text-[#333]">
            {details.map(([k, v]) => (
              <div key={k} className="flex gap-[2px] whitespace-nowrap">
                <dt className="font-bold">{k}:</dt>
                <dd>{v}</dd>
              </div>
            ))}
          </dl>
          <Link className="top-[348px] left-[44px] h-[3px] w-[17px]" />
          <Badge letter="G" className="top-[328px] left-[2px]" />

          <div className="absolute right-[7px] bottom-[4px] w-[88px] rounded-[3px] bg-white/85 py-1 pl-[5px] text-[10px] leading-[13px] text-[#555]">
            <strong className="block">RICHNESS_ALL</strong>
            {legend.map(([c, t]) => (
              <div key={t} className="flex gap-[5px]">
                <span className={`h-[13px] w-[13px] ${c}`} />
                {t}
              </div>
            ))}
          </div>
        </div>
      </div>
    </section>
  );
}

export default function App() {
  return (
    <main className="bg-white pt-[3px] pr-[3px] pb-1 pl-1 font-['Noto_Sans','Noto_Sans_CJK_SC',sans-serif] text-[14px] leading-[21px] text-[#262626]">
      <div className="grid grid-cols-[544fr_685fr] border-[3px] border-[#2b2b2b]">
        <div className="min-w-0 border-r-[3px] border-[#2b2b2b]">
          <Taxonomic />
          <Spatial />
        </div>
        <div className="min-w-0">
          <Gbif />
          <Results />
        </div>
      </div>
    </main>
  );
}
